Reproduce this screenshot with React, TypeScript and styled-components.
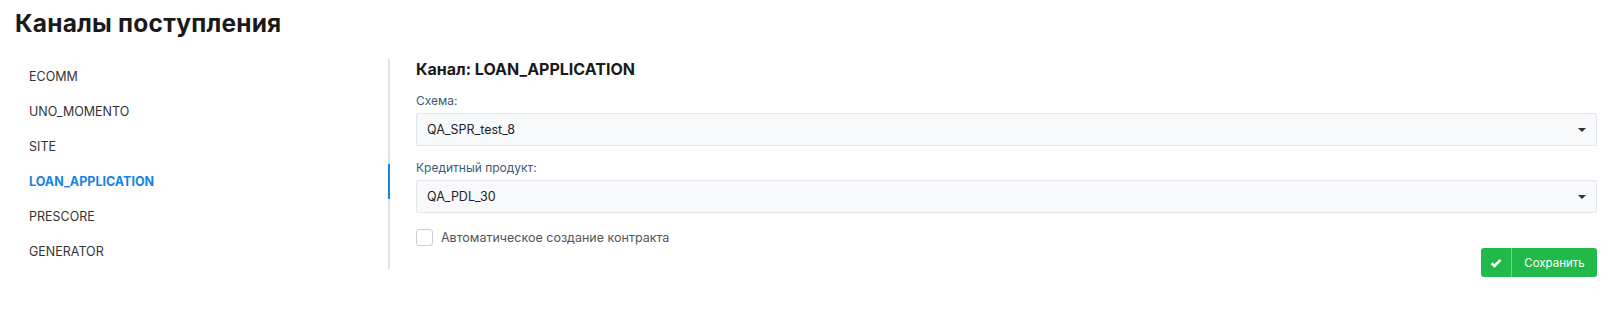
import { useState } from 'react'
import styled, { createGlobalStyle } from 'styled-components'

const GlobalStyle = createGlobalStyle`
  body {
    margin: 0;
    background: #fff;
    font-family: Inter, "Noto Sans", sans-serif;
    color: #222;
  }
`

const Page = styled.div`
  padding: 0 12px 0 15px;
`

const Title = styled.h1`
  margin: 0;
  padding-top: 5px;
  height: 54px;
  line-height: 36px;
  font-size: 24.5px;
  font-weight: 700;
  letter-spacing: 0.2px;
  color: #1a1a1a;
`

const Layout = styled.div`
  display: flex;
  align-items: flex-start;
`

const Sidebar = styled.nav`
  width: 373px;
  flex-shrink: 0;
  border-right: 2px solid #e2e2e2;
  display: flex;
  flex-direction: column;
`

const NavItem = styled.div<{ $active?: boolean }>`
  height: 35px;
  display: flex;
  align-items: center;
  padding-left: 14px;
  margin-right: -2px;
  font-size: 12.5px;
  font-weight: ${p => (p.$active ? 700 : 400)};
  color: ${p => (p.$active ? '#1784e0' : '#333')};
  border-right: 2px solid ${p => (p.$active ? '#1784e0' : 'transparent')};
  cursor: pointer;
`

const Content = styled.section`
  flex: 1;
  padding-left: 26px;
  display: flex;
  flex-direction: column;
`

const Heading = styled.h2`
  margin: 0;
  height: 20px;
  line-height: 20px;
  font-size: 16px;
  font-weight: 700;
  color: #1a1a1a;
`

const Label = styled.div`
  margin-top: 12px;
  height: 20px;
  line-height: 20px;
  font-size: 12px;
  color: #3d5a7a;
`

const Select = styled.div`
  margin-top: 2px;
  height: 31px;
  border: 1px solid #e3e6ea;
  border-radius: 2px;
  background: #f8f9fb;
  display: flex;
  align-items: center;
  justify-content: space-between;
  padding: 0 10px 0 10px;
  font-size: 12.5px;
  color: #222;
`

const Caret = styled.span`
  width: 0;
  height: 0;
  border-left: 4px solid transparent;
  border-right: 4px solid transparent;
  border-top: 4px solid #333;
`

const CheckRow = styled.label`
  margin-top: 16px;
  display: flex;
  align-items: center;
  gap: 8px;
  font-size: 12.5px;
  color: #555;
`

const Box = styled.span`
  width: 15px;
  height: 15px;
  border: 1px solid #c8ced6;
  border-radius: 3px;
  background: #fff;
`

const Actions = styled.div`
  margin-top: 2px;
  display: flex;
  justify-content: flex-end;
`

const SaveButton = styled.button`
  height: 29px;
  width: 116px;
  border: none;
  border-radius: 3px;
  background: #21b94a;
  color: #fff;
  font-family: inherit;
  font-size: 11.5px;
  display: flex;
  align-items: stretch;
  padding: 0;
  cursor: pointer;
`

const ButtonIcon = styled.span`
  width: 30px;
  display: flex;
  align-items: center;
  justify-content: center;
  border-right: 1px solid rgba(255, 255, 255, 0.35);
`

const ButtonText = styled.span`
  flex: 1;
  display: flex;
  align-items: center;
  justify-content: center;
`

const channels = ['ECOMM', 'UNO_MOMENTO', 'SITE', 'LOAN_APPLICATION', 'PRESCORE', 'GENERATOR']

export default function App() {
  const [active, setActive] = useState('LOAN_APPLICATION')

  return (
    <Page>
      <GlobalStyle />
      <Title>Каналы поступления</Title>
      <Layout>
        <Sidebar>
          {channels.map(c => (
            <NavItem key={c} $active={c === active} onClick={() => setActive(c)}>
              {c}
            </NavItem>
          ))}
        </Sidebar>
        <Content>
          <Heading>Канал: {active}</Heading>
          <Label>Схема:</Label>
          <Select>
            QA_SPR_test_8
            <Caret />
          </Select>
          <Label>Кредитный продукт:</Label>
          <Select>
            QA_PDL_30
            <Caret />
          </Select>
          <CheckRow>
            <Box />
            Автоматическое создание контракта
          </CheckRow>
          <Actions>
            <SaveButton>
              <ButtonIcon>
                <svg width="12" height="10" viewBox="0 0 12 10">
                  <path d="M1.5 5.2 L4.5 8 L10.5 1.8" fill="none" stroke="#fff" strokeWidth="2.6" />
                </svg>
              </ButtonIcon>
              <ButtonText>Сохранить</ButtonText>
            </SaveButton>
          </Actions>
        </Content>
      </Layout>
    </Page>
  )
}
